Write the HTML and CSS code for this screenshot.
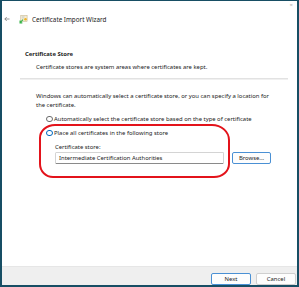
FILE: index.html
```html
<!DOCTYPE html>
<html lang="en">
<head>
    <meta charset="UTF-8">
    <meta name="viewport" content="width=device-width, initial-scale=1.0">
    <title>Certificate Import Wizard</title>
    <link rel="stylesheet" href="styles.css">
</head>
<body>
    <div class="window">
        <div class="titlebar">
            <svg class="back" viewBox="0 0 6 6">
                <path d="M5.5 3H0.8M2.8 1L0.8 3l2 2" fill="none" stroke="#555" stroke-width="0.6"/>
            </svg>
            <svg class="cert-icon" viewBox="0 0 10 10">
                <rect x="2" y="0.5" width="7" height="6.5" fill="#f4ecd2" stroke="#b9a77a" stroke-width="0.5"/>
                <path d="M3.2 2h3M3.2 3.3h2.5" stroke="#a9b7c9" stroke-width="0.5"/>
                <circle cx="7.2" cy="4.8" r="1.4" fill="#f0b429"/>
                <path d="M4.5 5.2L1.8 7.9M1.2 6.2v2.5h2.5" fill="none" stroke="#39b54a" stroke-width="1.3"/>
            </svg>
            <span class="title">Certificate Import Wizard</span>
            <span class="close">&times;</span>
        </div>

        <div class="content">
            <h2>Certificate Store</h2>
            <p class="subtitle">Certificate stores are system areas where certificates are kept.</p>
            <div class="separator"></div>

            <p class="intro">Windows can automatically select a certificate store, or you can specify a location for the certificate.</p>

            <label class="radio-row">
                <span class="radio"></span>
                Automatically select the certificate store based on the type of certificate
            </label>
            <label class="radio-row">
                <span class="radio checked"></span>
                Place all certificates in the following store
            </label>

            <div class="store">
                <div class="store-label">Certificate store:</div>
                <div class="store-row">
                    <div class="textbox">Intermediate Certification Authorities</div>
                    <button class="btn default">Browse...</button>
                </div>
            </div>
        </div>

        <div class="footer">
            <button class="btn default">Next</button>
            <button class="btn">Cancel</button>
        </div>

        <div class="highlight"></div>
    </div>
</body>
</html>
```

FILE: styles.css
```css
:root {
    --frame: #174e64;
    --text: #222222;
    --accent: #0067c0;
    --annotation: #e3131b;
}

* {
    margin: 0;
    padding: 0;
    box-sizing: border-box;
}

body {
    width: 299px;
    height: 287px;
    font-family: 'Noto Sans', 'Open Sans', sans-serif;
    font-size: 5.9px;
    color: var(--text);
    background: #ffffff;
}

.window {
    position: relative;
    width: 299px;
    height: 287px;
    display: flex;
    flex-direction: column;
    border: 2px solid var(--frame);
    border-top-width: 1px;
    background: #ffffff;
}

.titlebar {
    height: 36px;
    display: flex;
    align-items: center;
}

.back {
    width: 6px;
    height: 6px;
    margin-left: 2px;
}

.cert-icon {
    width: 9px;
    height: 9px;
    margin-left: 9px;
}

.title {
    margin-left: 4px;
    font-size: 6.3px;
}

.close {
    align-self: flex-start;
    margin-left: auto;
    margin-right: 4px;
    font-size: 6px;
    color: #b0b0b0;
}

.content {
    padding-left: 23px;
}

h2 {
    margin-top: 13px;
    font-size: 5.9px;
    font-weight: 700;
    line-height: 8px;
}

.subtitle {
    margin-top: 5px;
    padding-left: 11px;
    line-height: 8px;
}

.separator {
    height: 1px;
    margin: 7px 9px 0 -5px;
    background: #e2e2e2;
    box-shadow: 0 1px 0 #f0f0f0;
}

.intro {
    margin-top: 13px;
    padding-left: 11px;
    padding-right: 23px;
    line-height: 9px;
}

.radio-row {
    display: flex;
    align-items: center;
    height: 14px;
    padding-left: 21px;
    gap: 1.5px;
}

.radio-row:first-of-type {
    margin-top: 2px;
}

.radio {
    width: 6.5px;
    height: 6.5px;
    border-radius: 50%;
    border: 0.7px solid #6b6b6b;
    background: #ffffff;
}

.radio.checked {
    border: 1.8px solid var(--accent);
}

.store {
    padding-left: 30px;
}

.store-label {
    margin-top: 3px;
    line-height: 8px;
}

.store-row {
    display: flex;
    align-items: center;
    margin-top: 1px;
    gap: 8px;
}

.textbox {
    width: 169px;
    height: 12px;
    padding-left: 3px;
    line-height: 11px;
    border: 1px solid #d4d4d4;
    border-bottom-color: #8a8a8a;
    border-radius: 1.5px;
}

.btn {
    width: 39px;
    height: 11.5px;
    font-family: inherit;
    font-size: 5.9px;
    color: var(--text);
    background: #fdfdfd;
    border: 1px solid #cfcfcf;
    border-radius: 2px;
}

.btn.default {
    border-color: #4a90d4;
}

.footer {
    margin-top: auto;
    height: 19px;
    display: flex;
    justify-content: flex-end;
    align-items: flex-start;
    gap: 5px;
    padding: 6px 1px 0 0;
    background: #efefef;
    border-top: 1px solid #e6e6e6;
}

.footer .btn {
    width: 40px;
}

/* hand-drawn marker over the store choice */
.highlight {
    position: absolute;
    left: 37px;
    top: 123px;
    width: 191px;
    height: 54px;
    border: 2.5px solid var(--annotation);
    border-radius: 16px 18px 16px 14px / 14px 16px 14px 14px;
}
```
